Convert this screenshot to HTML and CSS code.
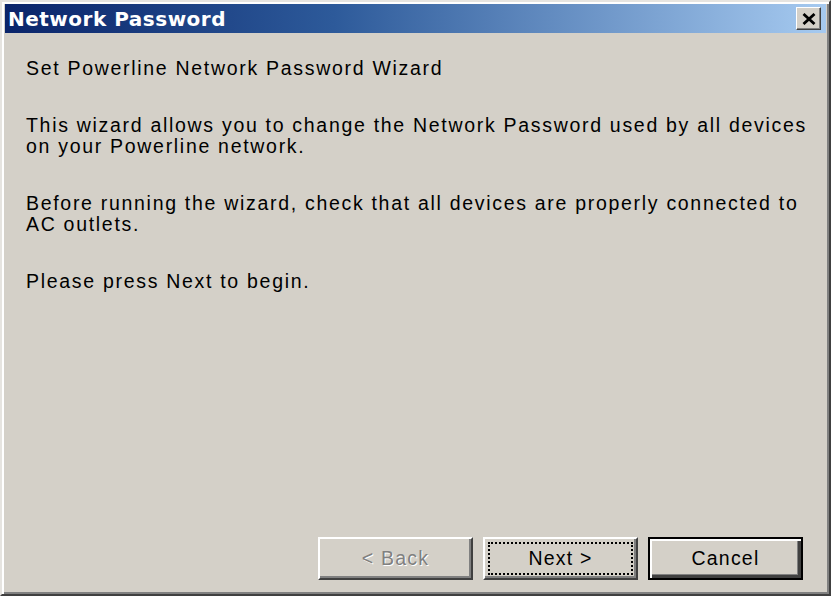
FILE: index.html
```html
<!DOCTYPE html>
<html>
<head>
<meta charset="utf-8">
<title>Network Password</title>
<link rel="stylesheet" href="styles.css">
</head>
<body>
<div class="window">
  <div class="titlebar">
    <span class="title">Network Password</span>
    <div class="close">
      <svg width="14" height="12" viewBox="0 0 14 12"><path d="M1.5 1 L12.5 11 M12.5 1 L1.5 11" stroke="#000" stroke-width="2.8" fill="none"/></svg>
    </div>
  </div>
  <div class="content">
    <p class="para">Set Powerline Network Password Wizard</p>
    <p class="para">This wizard allows you to change the Network Password used by all devices<br>on your Powerline network.</p>
    <p class="para">Before running the wizard, check that all devices are properly connected to<br>AC outlets.</p>
    <p class="para">Please press Next to begin.</p>
  </div>
  <div class="buttons">
    <div class="btn disabled"><span class="label">&lt; Back</span></div>
    <div class="btn focused"><span class="label focus">Next &gt;</span></div>
    <div class="btn default"><span class="label">Cancel</span></div>
  </div>
</div>
</body>
</html>
```
FILE: styles.css
```css
html, body {
  margin: 0;
  padding: 0;
  background: #ffffff;
}
.window {
  width: 831px;
  height: 596px;
  box-sizing: border-box;
  background: #d4d0c8;
  border: 2px solid;
  border-color: #e6e4e0 #404040 #404040 #e6e4e0;
  box-shadow: inset 2px 2px 0 #ffffff, inset -2px -2px 0 #808080;
  padding: 2px 3px 4px 3px;
  display: flex;
  flex-direction: column;
  font-family: "Liberation Sans", Arial, sans-serif;
}
.titlebar {
  height: 29px;
  flex: none;
  background: linear-gradient(to right, #0a246a 0%, #2d5a9a 40%, #a6caf0 100%);
  display: flex;
  align-items: center;
  justify-content: space-between;
  padding: 0 5px 0 3px;
}
.title {
  color: #ffffff;
  font-family: "DejaVu Sans", Verdana, sans-serif;
  font-weight: bold;
  font-size: 20px;
  letter-spacing: 0.5px;
}
.close {
  width: 25px;
  height: 23px;
  box-sizing: border-box;
  background: #d4d0c8;
  border: 1px solid;
  border-color: #ffffff #404040 #404040 #ffffff;
  box-shadow: inset -1px -1px 0 #808080;
  display: flex;
  align-items: center;
  justify-content: center;
}
.content {
  flex: 1;
  padding: 25px 0 0 21px;
  color: #000000;
  font-size: 19.5px;
  letter-spacing: 1.7px;
  line-height: 21px;
}
.para {
  margin: 0 0 36px 0;
  white-space: nowrap;
}
.buttons {
  flex: none;
  display: flex;
  justify-content: flex-end;
  gap: 10px;
  padding: 0 23px 10px 0;
}
.btn {
  width: 155px;
  height: 43px;
  box-sizing: border-box;
  background: #d4d0c8;
  border: 2px solid;
  border-color: #ffffff #404040 #404040 #ffffff;
  box-shadow: inset -2px -2px 0 #808080;
  display: flex;
  align-items: center;
  justify-content: center;
  font-size: 19.5px;
  letter-spacing: 1.2px;
  color: #000000;
  padding: 3px;
}
.btn.disabled {
  color: #808080;
  text-shadow: 1px 1px 0 #ffffff;
}
.btn.focused .label {
  align-self: stretch;
  flex: 1;
  display: flex;
  align-items: center;
  justify-content: center;
  border: 2px dotted #000000;
}
.btn.default {
  border: 2px solid #000000;
  box-shadow: inset 2px 2px 0 #ffffff, inset -3px -3px 0 #404040, inset -4px -4px 0 #808080;
}
```
